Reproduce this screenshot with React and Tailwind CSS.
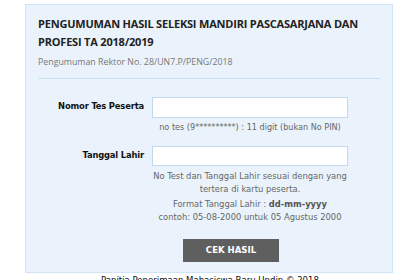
import React from "react";

export default function App() {
  const tahoma = { fontFamily: '"DejaVu Sans Condensed", "DejaVu Sans", sans-serif' };
  return (
    <div className="w-[420px] h-[280px] overflow-hidden bg-white">
      <div className="ml-[25px] mt-[4px] w-[368px] h-[269px] border border-[#cfe4f6] bg-[#eaf3fb] px-[12px] pt-[10px]">
        <div
          className="whitespace-nowrap text-[11px] font-bold leading-[18px] tracking-[-0.2px] text-[#222222]"
          style={{ fontFamily: '"Open Sans", sans-serif' }}
        >
          PENGUMUMAN HASIL SELEKSI MANDIRI PASCASARJANA DAN
          <br />
          PROFESI TA 2018/2019
        </div>
        <div
          className="mt-[4px] text-[8.8px] leading-[14px] text-[#777777]"
          style={{ fontFamily: '"Open Sans", sans-serif' }}
        >
          Pengumuman Rektor No. 28/UN7.P/PENG/2018
        </div>
        <div className="mt-[9px] h-px w-full bg-[#c6dff2]" />

        <div className="mt-[18px] flex" style={tahoma}>
          <div className="w-[106px] pt-[3px] text-right text-[9.3px] font-bold leading-[12px] tracking-[-0.15px] text-[#111111]">
            Nomor Tes Peserta
          </div>
          <div className="ml-[8px] w-[196px] flex flex-col items-center">
            <div className="h-[21px] w-[196px] border border-[#c3d9ea] bg-white" />
            <div className="mt-[3px] whitespace-nowrap text-[9px] leading-[12px] text-[#666666]">
              no tes (9**********) : 11 digit (bukan No PIN)
            </div>
          </div>
        </div>

        <div className="mt-[13px] flex" style={tahoma}>
          <div className="w-[106px] pt-[3px] text-right text-[9.3px] font-bold leading-[12px] tracking-[-0.15px] text-[#111111]">
            Tanggal Lahir
          </div>
          <div className="ml-[8px] w-[196px] flex flex-col items-center">
            <div className="h-[20px] w-[196px] border border-[#c3d9ea] bg-white" />
            <div className="mt-[3px] whitespace-nowrap text-center text-[9.3px] leading-[13px] text-[#666666]">
              No Test dan Tanggal Lahir sesuai dengan yang
              <br />
              tertera di kartu peserta.
            </div>
            <div className="mt-[2px] whitespace-nowrap text-center text-[9.3px] leading-[13px] text-[#666666]">
              Format Tanggal Lahir : <b className="text-[#555555]">dd-mm-yyyy</b>
              <br />
              contoh: 05-08-2000 untuk 05 Agustus 2000
            </div>
          </div>
        </div>

        <div className="mt-[16px] ml-[145px] flex h-[23px] w-[96px] items-center justify-center bg-[#5f5f5f] text-[9.5px] font-bold text-white" style={tahoma}>
          CEK HASIL
        </div>
      </div>
      <div className="mt-[1px] text-center text-[9.5px] leading-[12px] text-[#111111]" style={tahoma}>
        Panitia Penerimaan Mahasiswa Baru Undip © 2018
      </div>
    </div>
  );
}
